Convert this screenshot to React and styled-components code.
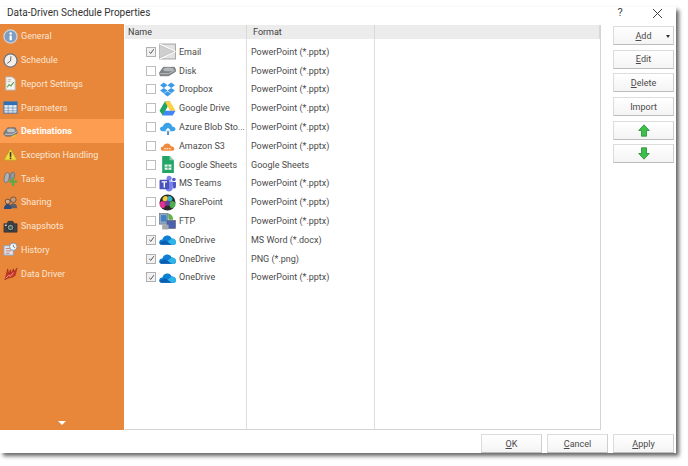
import React from 'react';
import styled, { createGlobalStyle } from 'styled-components';

const GlobalStyle = createGlobalStyle`
  html, body {
    margin: 0;
    padding: 0;
    background: #ffffff;
  }
  body {
    font-family: Roboto, "Open Sans", sans-serif;
    color: #4a4a4a;
  }
`;

const Page = styled.div`
  width: 688px;
  height: 466px;
  overflow: hidden;
  padding-top: 7px;
  box-sizing: border-box;
`;

const Dialog = styled.div`
  width: 676px;
  height: 446px;
  background: #ffffff;
  box-shadow: 3px 3px 4px rgba(0, 0, 0, 0.6);
  display: flex;
  flex-direction: column;
`;

const TitleBar = styled.div`
  height: 17px;
  display: flex;
  align-items: flex-start;
  padding: 1px 0 0 7px;
  box-sizing: border-box;
  font-size: 10px;
  line-height: 10px;
  color: #333333;
`;

const TitleText = styled.div`
  flex: 1;
`;

const HelpButton = styled.div`
  width: 16px;
  font-size: 11px;
  line-height: 9px;
  text-align: center;
  margin-right: 22px;
  color: #444444;
`;

const CloseButton = styled.div`
  width: 14px;
  height: 11px;
  margin-right: 12px;
  display: flex;
  align-items: center;
  justify-content: center;
`;

const Body = styled.div`
  flex: 1;
  display: flex;
  min-height: 0;
`;

const Sidebar = styled.div`
  width: 124px;
  height: 406px;
  background: #e8873a;
  display: flex;
  flex-direction: column;
  padding-top: 0.5px;
  box-sizing: border-box;
  position: relative;
`;

const NavItem = styled.div`
  height: 23.72px;
  flex: none;
  display: flex;
  align-items: center;
  gap: 3px;
  padding-left: 3px;
  font-size: 9px;
  color: ${({ $active }) => ($active ? '#ffffff' : '#fbe6d4')};
  font-weight: ${({ $active }) => ($active ? 700 : 400)};
  background: ${({ $active }) => ($active ? '#fd9d51' : 'transparent')};
`;

const NavIcon = styled.div`
  width: 15px;
  height: 15px;
  flex: none;
`;

const ScrollArrow = styled.div`
  position: absolute;
  left: 58px;
  bottom: 5px;
  width: 0;
  height: 0;
  border-left: 4px solid transparent;
  border-right: 4px solid transparent;
  border-top: 4px solid #ffffff;
`;

const ListPanel = styled.div`
  width: 476px;
  height: 405px;
  margin-left: 1px;
  margin-top: 1px;
  box-sizing: border-box;
  border-right: 1px solid #d4d4d4;
  border-bottom: 1px solid #d4d4d4;
  display: grid;
  grid-template-columns: 122px 128px 1fr;
  grid-template-rows: 14px 1fr;
`;

const HeaderCell = styled.div`
  background: #ececec;
  border-right: 1px solid #d8d8d8;
  font-size: 9px;
  color: #3c3c3c;
  padding-left: ${({ $pad }) => $pad}px;
  display: flex;
  align-items: center;
`;

const Column = styled.div`
  border-right: ${({ $last }) => ($last ? 'none' : '1px solid #dedede')};
  padding-top: 3.5px;
  box-sizing: border-box;
  min-width: 0;
`;

const NameRow = styled.div`
  height: 18.8px;
  display: flex;
  align-items: center;
  padding-left: 21px;
  font-size: 9px;
  color: #4a4a4a;
  white-space: nowrap;
`;

const CheckBox = styled.div`
  width: 8px;
  height: 8px;
  flex: none;
  border: 1px solid ${({ $checked }) => ($checked ? '#b0b0b0' : '#bdbdbd')};
  background: ${({ $checked }) => ($checked ? '#f1f1f1' : '#ffffff')};
  display: flex;
  align-items: center;
  justify-content: center;
`;

const RowIcon = styled.div`
  width: 17px;
  height: 17px;
  flex: none;
  margin: 0 3px 0 3px;
`;

const FormatRow = styled.div`
  height: 18.8px;
  display: flex;
  align-items: center;
  padding-left: 4px;
  font-size: 9px;
  color: #4a4a4a;
  white-space: nowrap;
`;

const ActionColumn = styled.div`
  margin-left: 12px;
  padding-top: 2px;
  display: flex;
  flex-direction: column;
  gap: 4.7px;
`;

const Button = styled.div`
  width: 61px;
  height: 19px;
  box-sizing: border-box;
  border: 1px solid #dcdcdc;
  border-bottom-color: #bcbcbc;
  border-right-color: #cfcfcf;
  background: linear-gradient(#ffffff, #f4f4f4);
  font-size: 9px;
  color: #4a4a4a;
  display: flex;
  align-items: center;
  justify-content: center;
  position: relative;
`;

const DropCaret = styled.span`
  position: absolute;
  right: 3px;
  top: 8px;
  width: 0;
  height: 0;
  border-left: 2.5px solid transparent;
  border-right: 2.5px solid transparent;
  border-top: 3px solid #333333;
`;

const Footer = styled.div`
  display: flex;
  justify-content: flex-end;
  gap: 5px;
  padding: 2px 2px 0 0;
`;

const Svg = ({ children, size = 16 }) => (
  <svg width="100%" height="100%" viewBox={`0 0 ${size} ${size}`} style={{ display: 'block', overflow: 'visible' }}>
    {children}
  </svg>
);

const navIcons = {
  info: (
    <Svg>
      <circle cx="8" cy="8" r="7" fill="#7f9dc2" stroke="#c9d4e2" strokeWidth="1.4" />
      <rect x="7" y="7" width="2.4" height="5" fill="#ffffff" />
      <circle cx="8.2" cy="4.8" r="1.3" fill="#ffffff" />
    </Svg>
  ),
  clock: (
    <Svg>
      <circle cx="8" cy="8" r="7" fill="#f4efe9" stroke="#6f7680" strokeWidth="1.4" />
      <path d="M8.5 3.5 L8 8.5 L4.5 11" fill="none" stroke="#59606a" strokeWidth="1" />
    </Svg>
  ),
  report: (
    <Svg>
      <path d="M3 1h7l3 3v11H3z" fill="#f4f4f4" stroke="#b8b8b8" />
      <path d="M4.5 12l2-3 2 1.5 3-4" fill="none" stroke="#5aa84a" strokeWidth="1.2" />
      <path d="M5 4h4M5 6h3" stroke="#c0a080" strokeWidth="0.8" />
    </Svg>
  ),
  table: (
    <Svg>
      <rect x="1" y="2" width="14" height="12" fill="#eef2f7" stroke="#3f6fa8" />
      <rect x="1" y="2" width="14" height="3.5" fill="#2f6fb4" />
      <path d="M1 8.5h14M1 11.5h14M5.5 5.5v8.5M10.5 5.5v8.5" stroke="#6c8fb8" strokeWidth="0.8" />
    </Svg>
  ),
  disk: (
    <Svg>
      <path d="M1 9l4-5h8l2 4v2l-5 3H3L1 11z" fill="#7f8488" stroke="#55595d" strokeWidth="0.6" />
      <ellipse cx="8.5" cy="6.8" rx="4.2" ry="2" fill="#bfc3c6" />
      <path d="M2 11l8 0 5-3" fill="none" stroke="#d5d7d9" strokeWidth="0.8" />
      <path d="M9 14l5-2.5" stroke="#e5c23a" strokeWidth="1.5" />
    </Svg>
  ),
  warn: (
    <Svg>
      <path d="M8 1.5 L15 14 H1 Z" fill="#f6d93f" stroke="#b79a22" strokeWidth="0.8" strokeLinejoin="round" />
      <rect x="7.2" y="5.5" width="1.7" height="5" fill="#333333" />
      <rect x="7.2" y="11.3" width="1.7" height="1.6" fill="#333333" />
    </Svg>
  ),
  tasks: (
    <Svg>
      <ellipse cx="4" cy="7" rx="2.6" ry="5.5" fill="#aab2bc" stroke="#626a74" strokeWidth="0.7" transform="rotate(10 4 7)" />
      <ellipse cx="10" cy="5.5" rx="2.4" ry="4.5" fill="#8f98a3" stroke="#626a74" strokeWidth="0.7" transform="rotate(10 10 5.5)" />
      <path d="M9.5 7h2.4v3H15v2.4h-3.1V16H9.5v-3.6H6.5V10h3z" fill="#5ca84a" />
    </Svg>
  ),
  sharing: (
    <Svg>
      <circle cx="11" cy="5" r="3" fill="#c69a78" stroke="#4b3a30" strokeWidth="0.7" />
      <path d="M7 14c0-4 2-5 4-5s4 1 4 5z" fill="#5a5f68" />
      <circle cx="5" cy="7" r="2.6" fill="#d4ab8a" stroke="#3d3028" strokeWidth="0.7" />
      <path d="M1 15c0-4 2-5.500 4-5.500s4 1.500 4 5.500z" fill="#2d4a78" />
    </Svg>
  ),
  camera: (
    <Svg>
      <path d="M1 5h3l1.500-2.500h5L12 5h3v9H1z" fill="#3f4347" stroke="#24272a" strokeWidth="0.6" />
      <circle cx="8" cy="9" r="3.6" fill="#8d9297" stroke="#202224" />
      <circle cx="8" cy="9" r="1.6" fill="#2f6a46" />
      <rect x="2" y="6" width="2" height="1.400" fill="#d9d9d9" />
    </Svg>
  ),
  history: (
    <Svg>
      <rect x="1" y="4" width="10" height="10" fill="#dfe6ef" stroke="#8ea3bd" />
      <path d="M3 7h6M3 9.500h6M3 12h4" stroke="#d06a5a" strokeWidth="0.9" />
      <circle cx="11" cy="5" r="4" fill="#f2f4f7" stroke="#7f8ea3" />
      <path d="M11 2.800V5l2 1" fill="none" stroke="#55606e" strokeWidth="0.8" />
    </Svg>
  ),
  driver: (
    <Svg>
      <path d="M2 15L5 3l1 5 2-4 1 4 2-5 1 3 3-4-2 8-3 2-5 1z" fill="#c9362a" stroke="#8e1f18" strokeWidth="0.5" />
      <path d="M3 13l3-3 2 1 3-4" fill="none" stroke="#f4c0a0" strokeWidth="0.8" />
    </Svg>
  ),
};

const OneDriveIcon = (
  <Svg>
    <path d="M3.500 13 C1 13 0 11.500 0.300 10 C0.600 8.500 2 7.800 3.200 8 C3.800 5.500 6 4 8.300 4.300 C10 4.500 11.300 5.600 11.800 7 C14 6.800 16 8.200 16 10.500 C16 12 15 13 13.500 13 Z" fill="#0f7fd4" />
    <path d="M3.500 13 C1.500 13 0.500 12 0.300 10.800 L6 8.800 L11 12 L12.500 13 Z" fill="#0a5fb0" />
    <path d="M8 10 L11.800 7 C14 6.800 16 8.200 16 10.500 C16 12 15 13 13.500 13 L12 13 Z" fill="#2fb4ea" />
  </Svg>
);

const rowIcons = {
  email: (
    <Svg>
      <rect x="0.500" y="1" width="15" height="14" fill="#e2e2e2" stroke="#a9a9a9" />
      <path d="M0.500 1 L15.500 8 M0.500 15 L15.500 8" stroke="#ffffff" strokeWidth="1.100" />
      <path d="M0.500 2 L14 8 L0.500 14" fill="#cfcfcf" stroke="#b4b4b4" strokeWidth="0.500" />
    </Svg>
  ),
  disk: (
    <Svg>
      <path d="M0.500 10 L4 5 H14.500 L15.500 7 V9 L9 13 H1 Z" fill="#808488" stroke="#4f5357" strokeWidth="0.500" />
      <ellipse cx="9" cy="7" rx="5" ry="1.800" fill="#b3b7ba" />
      <path d="M1 11 H9 L15 8" fill="none" stroke="#cfd1d3" strokeWidth="0.700" />
    </Svg>
  ),
  dropbox: (
    <Svg>
      <path d="M4.500 1.500 L8 4 L4.500 6.500 L1 4 Z M11.500 1.500 L15 4 L11.500 6.500 L8 4 Z M4.500 6.500 L8 9 L4.500 11.500 L1 9 Z M11.500 6.500 L15 9 L11.500 11.500 L8 9 Z M4.500 12 L8 9.700 L11.500 12 L8 14.500 Z" fill="#3d9ae8" />
    </Svg>
  ),
  gdrive: (
    <Svg>
      <path d="M5.500 1.500 H10.500 L6 10 L3.500 14.500 L0.500 10 Z" fill="#1fa463" />
      <path d="M5.500 1.500 H10.500 L15.500 10 H10.500 Z" fill="#ffcf3f" />
      <path d="M5.700 10 H15.500 L13 14.500 H3.200 Z" fill="#4285f4" />
    </Svg>
  ),
  azure: (
    <Svg>
      <path d="M3.500 11.500 C1.500 11.500 0.800 10 1 9 C1.300 7.700 2.500 7 3.500 7.200 C4.200 4.800 6 3.500 8 3.500 C10.500 3.500 12 5.200 12.400 7 C14 7 15.500 8 15.500 9.500 C15.500 10.800 14.500 11.500 13 11.500 Z" fill="#3aa0e8" />
      <path d="M8.500 15 V9 M6.500 11 L8.500 9 L10.500 11" fill="none" stroke="#ffffff" strokeWidth="1.200" />
      <path d="M7.800 11.500 H9.200 V15 H7.800 Z" fill="#1f74c0" />
    </Svg>
  ),
  s3: (
    <Svg>
      <path d="M4 13 C2 13 1.500 11.500 1.700 10.500 C2 9.500 2.800 9 3.800 9.200 C4.300 7 6 6 7.800 6 C9.800 6 11 7.400 11.300 8.800 C13 8.800 14.500 9.800 14.500 11 C14.500 12.300 13.500 13 12 13 Z" fill="#f08a3c" />
      <path d="M5 11 H11" stroke="#ffffff" strokeWidth="1" strokeDasharray="1.500 0.700" />
    </Svg>
  ),
  gsheets: (
    <Svg>
      <path d="M3 0 H10 L14 4 V16 H3 Z" fill="#23a566" />
      <path d="M10 0 L14 4 H10 Z" fill="#8ed1b1" />
      <rect x="5.300" y="8" width="6.400" height="5" fill="#e9f6ef" />
      <path d="M5.300 10.500 H11.700 M8.500 8 V13" stroke="#23a566" strokeWidth="0.800" />
    </Svg>
  ),
  teams: (
    <Svg>
      <circle cx="9.500" cy="3" r="2.400" fill="#7b83eb" />
      <circle cx="14" cy="4.200" r="1.700" fill="#5059c9" />
      <path d="M11.500 6.500 H16 V11 C16 12.500 14.500 13 13.500 12.500 Z" fill="#5059c9" />
      <path d="M6 6 H13 V12 C13 14.500 11 15.500 9.500 15.500 C7.500 15.500 6 14 6 12 Z" fill="#7b83eb" />
      <rect x="0.500" y="4.500" width="9" height="9" rx="0.800" fill="#4b53bc" />
      <path d="M2.500 6.500 H7.500 M5 6.500 V11.800" stroke="#ffffff" strokeWidth="1.300" />
    </Svg>
  ),
  sharepoint: (
    <Svg>
      <circle cx="8" cy="8" r="7.500" fill="#2a2a2a" />
      <path d="M8 2.500 A3 3 0 0 1 12.500 6 L8 8 Z" fill="#2fb4c8" />
      <path d="M8 2.500 A3 3 0 0 0 3.500 6 L8 8 Z" fill="#f4d03f" />
      <path d="M3 6.500 A3.200 3.200 0 0 0 5 13 L8 8 Z" fill="#e0338f" />
      <path d="M13 6.500 A3.200 3.200 0 0 1 11 13 L8 8 Z" fill="#4caf50" />
      <circle cx="8" cy="8.500" r="2.500" fill="#6a3fa0" />
    </Svg>
  ),
  ftp: (
    <Svg>
      <rect x="0.500" y="0.500" width="8" height="10" fill="#8ea6c2" stroke="#5d6c7e" strokeWidth="0.600" />
      <rect x="2" y="2" width="5" height="6" fill="#3f80c4" />
      <path d="M9 1 C11 1 13 3 13 6 L9.500 6 Z" fill="#5fb84a" stroke="#3f8a30" strokeWidth="0.400" />
      <rect x="7.500" y="7" width="8" height="7.500" fill="#4a62b0" stroke="#5b5f66" strokeWidth="0.600" />
      <rect x="3" y="11" width="6" height="4.500" fill="#a4a8ad" />
    </Svg>
  ),
  onedrive: OneDriveIcon,
};

const navItems = [
  ['General', 'info'],
  ['Schedule', 'clock'],
  ['Report Settings', 'report'],
  ['Parameters', 'table'],
  ['Destinations', 'disk', true],
  ['Exception Handling', 'warn'],
  ['Tasks', 'tasks'],
  ['Sharing', 'sharing'],
  ['Snapshots', 'camera'],
  ['History', 'history'],
  ['Data Driver', 'driver'],
];

const PPT = 'PowerPoint (*.pptx)';

const destinations = [
  { name: 'Email', icon: 'email', format: PPT, checked: true },
  { name: 'Disk', icon: 'disk', format: PPT },
  { name: 'Dropbox', icon: 'dropbox', format: PPT },
  { name: 'Google Drive', icon: 'gdrive', format: PPT },
  { name: 'Azure Blob Sto...', icon: 'azure', format: PPT },
  { name: 'Amazon S3', icon: 's3', format: PPT },
  { name: 'Google Sheets', icon: 'gsheets', format: 'Google Sheets' },
  { name: 'MS Teams', icon: 'teams', format: PPT },
  { name: 'SharePoint', icon: 'sharepoint', format: PPT },
  { name: 'FTP', icon: 'ftp', format: PPT },
  { name: 'OneDrive', icon: 'onedrive', format: 'MS Word (*.docx)', checked: true },
  { name: 'OneDrive', icon: 'onedrive', format: 'PNG (*.png)', checked: true },
  { name: 'OneDrive', icon: 'onedrive', format: PPT, checked: true },
];

const Arrow = ({ down }) => (
  <svg width="12" height="13" viewBox="0 0 12 13" style={down ? { transform: 'rotate(180deg)' } : undefined}>
    <path d="M6 0.800 L11.300 6.500 H8.500 V12.200 H3.500 V6.500 H0.700 Z" fill="#3cc04a" stroke="#2a8a35" strokeWidth="0.800" />
  </svg>
);

export default function App() {
  return (
    <Page>
      <GlobalStyle />
      <Dialog>
        <TitleBar>
          <TitleText>Data-Driven Schedule Properties</TitleText>
          <HelpButton>?</HelpButton>
          <CloseButton>
            <svg width="11" height="11" viewBox="0 0 11 11">
              <path d="M1 1 L10 10 M10 1 L1 10" stroke="#444444" strokeWidth="1" />
            </svg>
          </CloseButton>
        </TitleBar>
        <Body>
          <Sidebar>
            {navItems.map(([label, icon, active]) => (
              <NavItem key={label} $active={active}>
                <NavIcon>{navIcons[icon]}</NavIcon>
                {label}
              </NavItem>
            ))}
            <ScrollArrow />
          </Sidebar>
          <ListPanel>
            <HeaderCell $pad={3}>Name</HeaderCell>
            <HeaderCell $pad={6}>Format</HeaderCell>
            <HeaderCell />
            <Column>
              {destinations.map((d, i) => (
                <NameRow key={i}>
                  <CheckBox $checked={d.checked}>
                    {d.checked && (
                      <svg width="7" height="7" viewBox="0 0 7 7">
                        <path d="M1.200 3.800 L2.800 5.400 L5.800 1.200" fill="none" stroke="#555555" strokeWidth="1" />
                      </svg>
                    )}
                  </CheckBox>
                  <RowIcon>{rowIcons[d.icon]}</RowIcon>
                  {d.name}
                </NameRow>
              ))}
            </Column>
            <Column>
              {destinations.map((d, i) => (
                <FormatRow key={i}>{d.format}</FormatRow>
              ))}
            </Column>
            <Column $last />
          </ListPanel>
          <ActionColumn>
            <Button><span><u>A</u>dd</span><DropCaret /></Button>
            <Button><span><u>E</u>dit</span></Button>
            <Button><span><u>D</u>elete</span></Button>
            <Button>Import</Button>
            <Button><Arrow /></Button>
            <Button><Arrow down /></Button>
          </ActionColumn>
        </Body>
        <Footer>
          <Button><span><u>O</u>K</span></Button>
          <Button><span><u>C</u>ancel</span></Button>
          <Button><span><u>A</u>pply</span></Button>
        </Footer>
      </Dialog>
    </Page>
  );
}
